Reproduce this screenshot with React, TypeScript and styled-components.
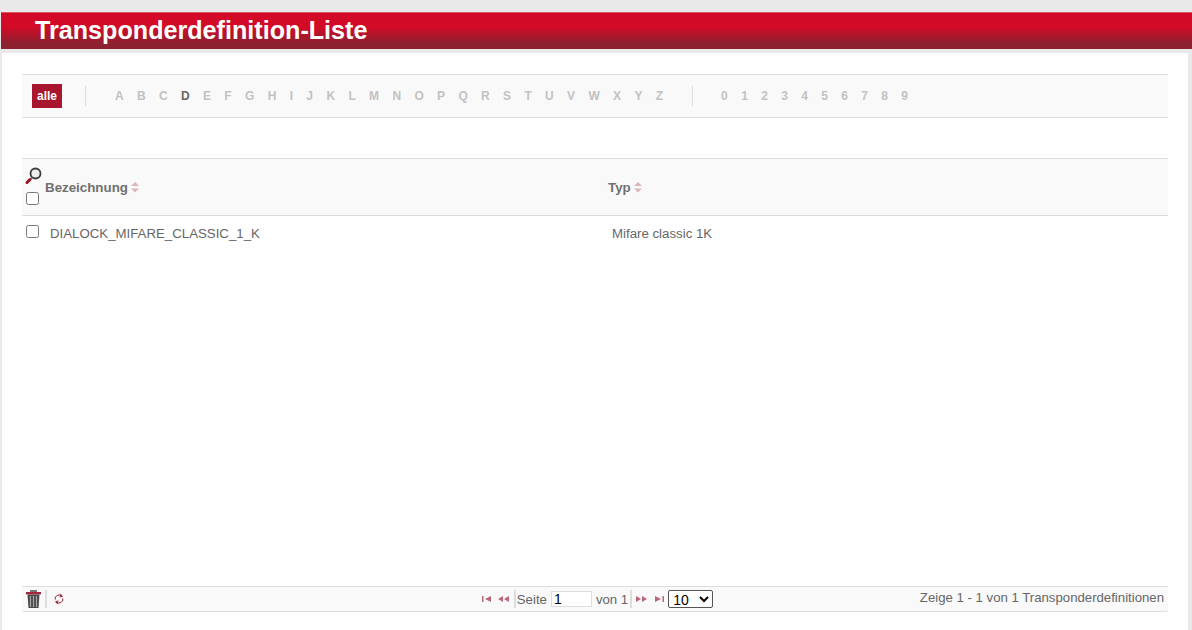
import React from 'react';
import styled, { createGlobalStyle } from 'styled-components';

const LETTERS = 'ABCDEFGHIJKLMNOPQRSTUVWXYZ'.split('');
const DIGITS = '0123456789'.split('');

const GlobalStyle = createGlobalStyle`
  html, body {
    margin: 0;
    padding: 0;
    height: 100%;
    overflow: hidden;
    background: #e9e9e9;
    font-family: "Liberation Sans", Arial, sans-serif;
  }
`;

const Page = styled.div`
  display: flex;
  flex-direction: column;
  height: 630px;
  padding-top: 12px;
  box-sizing: border-box;
`;

const TitleBar = styled.div`
  height: 37px;
  margin-left: 1px;
  padding-left: 34px;
  background: linear-gradient(180deg, #d30a27 0%, #d30a27 38%, #8c2130 85%, #8c2130 100%);
  border-top: 1px solid #dd5566;
  box-sizing: border-box;
  flex: none;
`;

const Title = styled.h1`
  margin: 0;
  font-size: 25.15px;
  line-height: 35px;
  font-weight: bold;
  color: #fff;
`;

const Panel = styled.div`
  flex: 1;
  display: flex;
  flex-direction: column;
  margin: 4px 4px 0 2px;
  padding: 21px 20px 18px 20px;
  background: #fff;
  box-sizing: border-box;
`;

const AlphaBar = styled.div`
  display: flex;
  align-items: center;
  height: 44px;
  padding-left: 10px;
  background: #f9f9f9;
  border-top: 1px solid #ddd;
  border-bottom: 1px solid #ddd;
  box-sizing: border-box;
  flex: none;
`;

const AllButton = styled.a`
  width: 30px;
  height: 24px;
  background: #a8152f;
  color: #fff;
  font-size: 12px;
  font-weight: bold;
  line-height: 24px;
  text-align: center;
`;

const BarDivider = styled.span<{ $left: number; $right: number }>`
  width: 1px;
  height: 20px;
  background: #ddd;
  margin-left: ${(p) => p.$left}px;
  margin-right: ${(p) => p.$right}px;
`;

const IndexGroup = styled.div`
  display: flex;
  gap: 13.33px;
`;

const IndexLink = styled.a<{ $active?: boolean }>`
  font-size: 12px;
  font-weight: bold;
  color: ${(p) => (p.$active ? '#666' : '#c2c2c2')};
`;

const Table = styled.div`
  flex: 1;
  margin-top: 40px;
  display: flex;
  flex-direction: column;
`;

const HeaderRow = styled.div`
  display: grid;
  grid-template-columns: 586px 1fr;
  height: 58px;
  background: #f9f9f9;
  border-top: 1px solid #ddd;
  border-bottom: 1px solid #ddd;
  box-sizing: border-box;
  flex: none;
`;

const HeaderFirst = styled.div`
  display: flex;
  align-items: center;
`;

const ToolStack = styled.div`
  display: flex;
  flex-direction: column;
  align-items: flex-start;
  gap: 7px;
  width: 23px;
  padding-left: 2px;
  box-sizing: border-box;
  margin-top: -2px;
`;

const HeaderLabel = styled.div`
  display: flex;
  align-items: center;
  gap: 3px;
  font-size: 13.33px;
  font-weight: bold;
  color: #707070;
`;

const Check = styled.input.attrs({ type: 'checkbox' })`
  width: 13px;
  height: 13px;
  margin: 0 0 0 2px;
  flex: none;
`;

const RowCheck = styled(Check)`
  margin-top: -3px;
`;

const BodyArea = styled.div`
  flex: 1;
`;

const DataRow = styled.div`
  display: grid;
  grid-template-columns: 590px 1fr;
  align-items: center;
  height: 34px;
  font-size: 13.25px;
  color: #666;
`;

const NameCell = styled.div`
  display: flex;
  align-items: center;
  padding-left: 2px;
  gap: 11px;
`;

const Footer = styled.div`
  display: grid;
  grid-template-columns: 1fr auto 1fr;
  align-items: center;
  height: 26px;
  background: #f9f9f9;
  border-top: 1px solid #ddd;
  border-bottom: 1px solid #ddd;
  border-radius: 0 0 2px 2px;
  box-sizing: border-box;
  flex: none;
`;

const FooterLeft = styled.div`
  display: flex;
  align-items: center;
  padding-left: 4px;
`;

const FooterDivider = styled.span`
  width: 2px;
  height: 18px;
  background: #ddd;
  margin: 0 7px 0 4px;
`;

const Pager = styled.div`
  display: flex;
  align-items: center;
  padding-left: 5px;
  font-size: 13.2px;
  color: #666;
`;

const PagerSlot = styled.span<{ $left: number }>`
  display: inline-flex;
  align-items: center;
  margin-left: ${(p) => p.$left}px;
`;

const PagerDivider = styled.span<{ $left: number }>`
  width: 2px;
  height: 18px;
  background: #ddd;
  margin-left: ${(p) => p.$left}px;
`;

const PageInput = styled.input`
  width: 41px;
  height: 16px;
  padding: 0 2px;
  border: 1px solid #ddd;
  box-sizing: border-box;
  font-family: "Liberation Sans", Arial, sans-serif;
  font-size: 14px;
  color: #000;
  background: #fff;
  margin: 0;
`;

const SizeSelect = styled.select`
  width: 45px;
  height: 18px;
  padding: 0;
  font-family: "Liberation Sans", Arial, sans-serif;
  font-size: 14px;
  color: #000;
  background: #fff;
  border: 1px solid #555;
  border-radius: 2px;
`;

const FooterInfo = styled.div`
  text-align: right;
  padding-right: 4px;
  font-size: 13.2px;
  color: #666;
  white-space: nowrap;
  margin-top: -3px;
`;

const SortIcon = () => (
  <svg width="8" height="11" viewBox="0 0 8 11">
    <path d="M4 0 L8 4 L0 4 Z M0 6.5 L8 6.5 L4 10.5 Z" fill="#dcb6bc" />
  </svg>
);

const SearchIcon = () => (
  <svg width="18" height="18" viewBox="0 0 18 18">
    <circle cx="11.5" cy="6.5" r="5" fill="#eee" stroke="#3a3a3a" strokeWidth="1.8" />
    <path d="M8 10.5 L6.5 12" stroke="#666" strokeWidth="1.5" />
    <path d="M6 12.5 L3 15.5" stroke="#9c1229" strokeWidth="3" strokeLinecap="round" />
  </svg>
);

const TrashIcon = () => (
  <svg width="15" height="18" viewBox="0 0 15 18">
    <path d="M4 0 H11 V2 H4 Z" fill="#777" />
    <rect x="0" y="2" width="15" height="2.4" fill="#a3263c" />
    <path d="M1.5 4.4 H13.5 L12.5 18 H2.5 Z" fill="#4a4a4a" />
    <path d="M4.5 6 V17 M7.5 6 V17 M10.5 6 V17" stroke="#a8a8a8" strokeWidth="1.2" />
  </svg>
);

const RefreshIcon = () => (
  <svg width="10" height="12" viewBox="0 0 10 12" fill="none" stroke="#8c1c30" strokeWidth="1">
    <path d="M1.2 6.5 A3.8 3.8 0 0 1 7.5 3" />
    <path d="M8.8 5.5 A3.8 3.8 0 0 1 2.5 9" />
    <path d="M6.2 0.8 L8.4 3.4 L5.6 4" />
    <path d="M3.8 11.2 L1.6 8.6 L4.4 8" />
  </svg>
);

const PagerIcon = ({ kind }: { kind: 'first' | 'prev' | 'next' | 'last' }) => {
  const paths = {
    first: 'M0 1 H1.5 V7 H0 Z M9 1 V7 L3 4 Z',
    prev: 'M0 4 L5 1 V7 Z M6 4 L11 1 V7 Z',
    next: 'M0 1 L5 4 L0 7 Z M6 1 L11 4 L6 7 Z',
    last: 'M0 1 L6 4 L0 7 Z M7.5 1 H9 V7 H7.5 Z',
  };
  return (
    <svg width="11" height="8" viewBox="0 0 11 8">
      <path d={paths[kind]} fill="#b9687a" />
    </svg>
  );
};

export default function App() {
  return (
    <Page>
      <GlobalStyle />
      <TitleBar>
        <Title>Transponderdefinition-Liste</Title>
      </TitleBar>
      <Panel>
        <AlphaBar>
          <AllButton>alle</AllButton>
          <BarDivider $left={23} $right={29} />
          <IndexGroup>
            {LETTERS.map((letter) => (
              <IndexLink key={letter} $active={letter === 'D'}>
                {letter}
              </IndexLink>
            ))}
          </IndexGroup>
          <BarDivider $left={29} $right={28} />
          <IndexGroup>
            {DIGITS.map((digit) => (
              <IndexLink key={digit}>{digit}</IndexLink>
            ))}
          </IndexGroup>
        </AlphaBar>
        <Table>
          <HeaderRow>
            <HeaderFirst>
              <ToolStack>
                <SearchIcon />
                <Check />
              </ToolStack>
              <HeaderLabel>
                Bezeichnung <SortIcon />
              </HeaderLabel>
            </HeaderFirst>
            <HeaderLabel>
              Typ <SortIcon />
            </HeaderLabel>
          </HeaderRow>
          <BodyArea>
            <DataRow>
              <NameCell>
                <RowCheck />
                DIALOCK_MIFARE_CLASSIC_1_K
              </NameCell>
              <div>Mifare classic 1K</div>
            </DataRow>
          </BodyArea>
          <Footer>
            <FooterLeft>
              <TrashIcon />
              <FooterDivider />
              <RefreshIcon />
            </FooterLeft>
            <Pager>
              <PagerSlot $left={0}>
                <PagerIcon kind="first" />
              </PagerSlot>
              <PagerSlot $left={5}>
                <PagerIcon kind="prev" />
              </PagerSlot>
              <PagerDivider $left={5} />
              <PagerSlot $left={1}>Seite</PagerSlot>
              <PagerSlot $left={4}>
                <PageInput defaultValue="1" />
              </PagerSlot>
              <PagerSlot $left={4}>von 1</PagerSlot>
              <PagerDivider $left={2} />
              <PagerSlot $left={4}>
                <PagerIcon kind="next" />
              </PagerSlot>
              <PagerSlot $left={8}>
                <PagerIcon kind="last" />
              </PagerSlot>
              <PagerSlot $left={2}>
                <SizeSelect defaultValue="10">
                  <option value="10">10</option>
                  <option value="20">20</option>
                </SizeSelect>
              </PagerSlot>
            </Pager>
            <FooterInfo>Zeige 1 - 1 von 1 Transponderdefinitionen</FooterInfo>
          </Footer>
        </Table>
      </Panel>
    </Page>
  );
}
